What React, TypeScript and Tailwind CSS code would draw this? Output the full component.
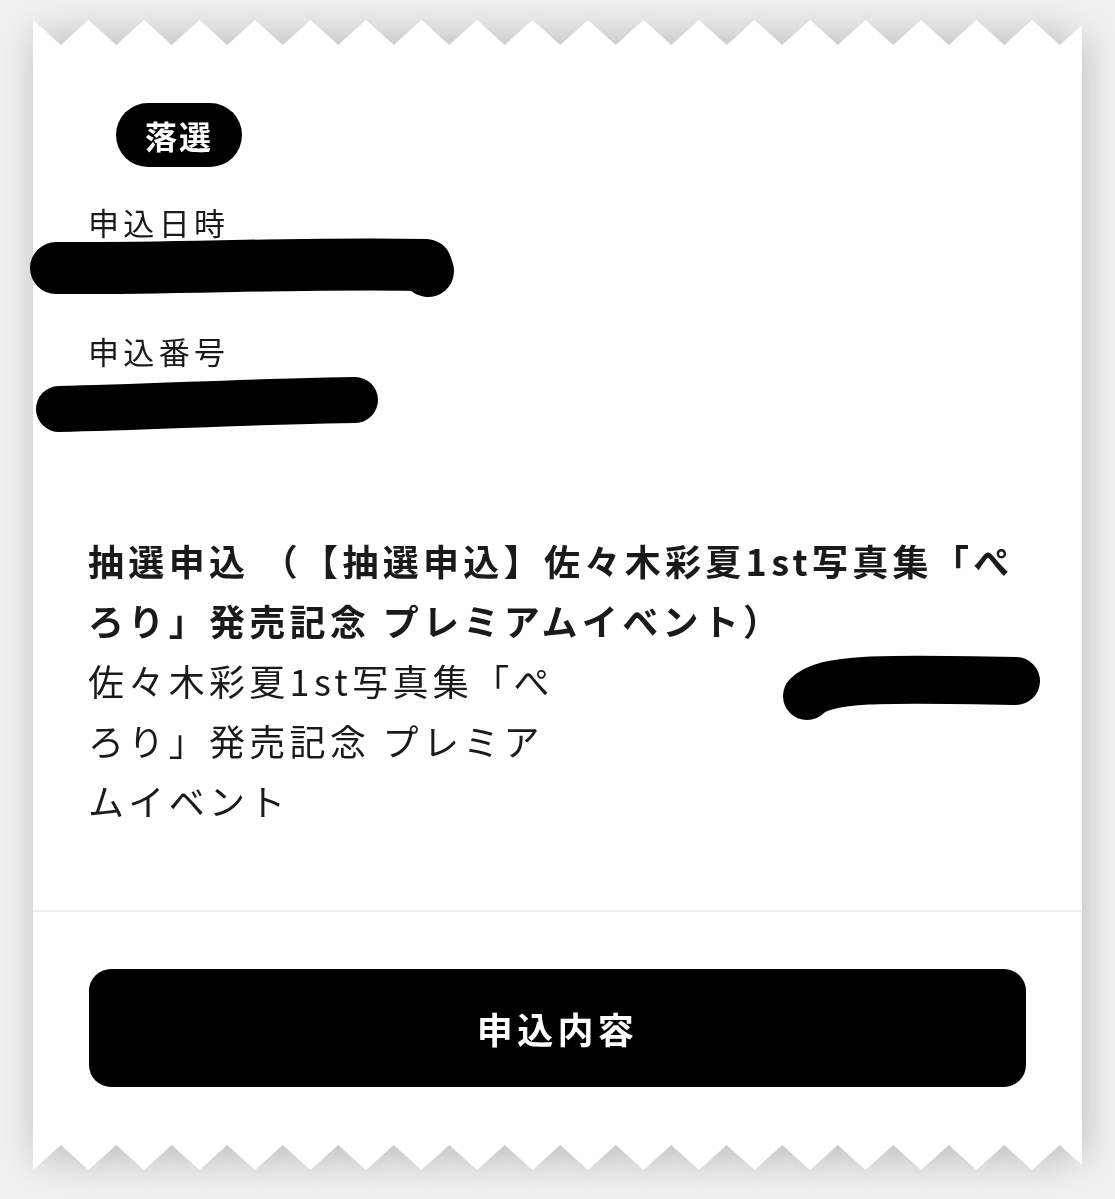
const CARD_W = 1049;
const TOOTH = 55.5;

// torn-ticket edge: a row of triangles, pointing up for the top edge, down for the bottom
function teeth(down: boolean) {
  const h = 27;
  const y = (v: number) => (down ? h - v : v);
  const pts: string[] = [`0,${y(h)}`];
  for (let x = 0; x <= CARD_W + TOOTH; x += TOOTH) {
    pts.push(`${x},${y(0)}`, `${x + TOOTH / 2},${y(25)}`);
  }
  pts.push(`${CARD_W + TOOTH},${y(h)}`);
  return pts.join(" ");
}

function Edge({ down = false }: { down?: boolean }) {
  return (
    <svg
      className="block h-[27px] w-full"
      viewBox={`0 0 ${CARD_W} 27`}
      preserveAspectRatio="none"
    >
      <polygon points={teeth(down)} fill="#ffffff" />
    </svg>
  );
}

// marker scribble that hides a value
function Scribble({
  w,
  h,
  d,
  width,
  className = "",
}: {
  w: number;
  h: number;
  d: string;
  width: number;
  className?: string;
}) {
  return (
    <svg
      className={`block ${className}`}
      width={w}
      height={h}
      viewBox={`0 0 ${w} ${h}`}
      overflow="visible"
    >
      <path
        d={d}
        fill="none"
        stroke="#000"
        strokeWidth={width}
        strokeLinecap="round"
        strokeLinejoin="round"
      />
    </svg>
  );
}

export default function App() {
  return (
    <div className="min-h-screen bg-[#f1f1f1] pt-[20px] pb-[29px] font-['Noto_Sans_CJK_JP',sans-serif] text-[#1a1a1a] [text-spacing-trim:space-all]">
      <div className="mx-auto w-[1049px] drop-shadow-[3px_2px_18px_rgba(0,0,0,0.22)]">
        <Edge />
        <div className="bg-white">
          <div className="px-[55px] pt-[56px]">
            <span className="ml-[28px] inline-flex h-[64px] w-[126px] items-center justify-center rounded-full bg-black text-[32px] font-bold tracking-[0.06em] text-white">
              落選
            </span>

            <p className="mt-[35px] text-[31px] leading-[40px] tracking-[0.14em]">
              申込日時
            </p>
            <Scribble
              w={426}
              h={58}
              width={52}
              className="-ml-[58px] -mt-[2px]"
              d="M26 28 C 140 29, 290 22, 396 25 L 398 31"
            />

            <p className="mt-[33px] text-[31px] leading-[40px] tracking-[0.14em]">
              申込番号
            </p>
            <Scribble
              w={350}
              h={58}
              width={46}
              className="-ml-[55px] mt-[5px]"
              d="M26 33 C 120 31, 230 25, 322 24"
            />

            <h2 className="mt-[96px] text-[36px] font-bold leading-[60px] tracking-[0.12em]">
              抽選申込 （【抽選申込】佐々木彩夏1st写真集「ぺろり」発売記念 プレミアムイベント）
            </h2>

            <div className="grid grid-cols-2">
              <p className="text-[36px] leading-[60px] tracking-[0.12em]">
                佐々木彩夏1st写真集「ぺろり」発売記念 プレミアムイベント
              </p>
              <Scribble
                w={262}
                h={66}
                width={48}
                className="-mr-[15px] mt-[6px] justify-self-end"
                d="M27 40 C 45 22, 100 22, 236 25"
              />
            </div>
          </div>

          <div className="mt-[80px] h-[2px] bg-[#efefef]" />

          <div className="px-[56px] pt-[57px] pb-[56px]">
            <button className="flex h-[118px] w-full items-center justify-center rounded-[22px] bg-black text-[36px] font-bold tracking-[0.12em] text-white">
              申込内容
            </button>
          </div>
        </div>
        <Edge down />
      </div>
    </div>
  );
}
